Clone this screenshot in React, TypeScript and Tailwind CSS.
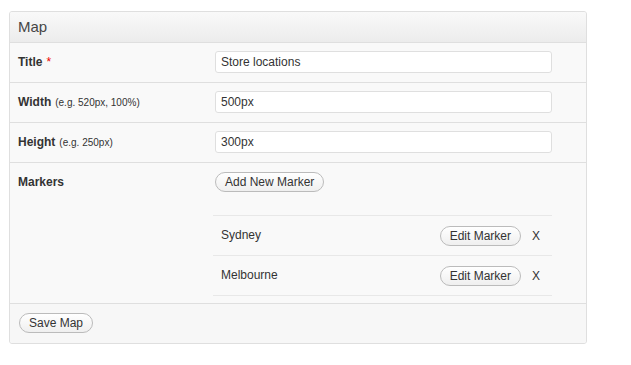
const font = { fontFamily: '"Liberation Sans", Arial, Helvetica, sans-serif' };

const Pill = ({ children }: { children: React.ReactNode }) => (
  <button className="block h-5 rounded-full border border-[#bbbbbb] bg-gradient-to-b from-white to-[#efefef] px-[9px] text-[12px] leading-[18px] text-[#333]">
    {children}
  </button>
);

const Field = ({ label, hint, required, value }: { label: string; hint?: string; required?: boolean; value: string }) => (
  <div className="flex h-10 items-start border-t border-[#dfdfdf] pt-2">
    <div className="flex h-[22px] w-[205px] items-center pl-2 text-[12px] text-[#333]">
      <span className="font-bold">{label}</span>
      {required && <span className="ml-1 text-[#e00]">*</span>}
      {hint && <span className="ml-1 text-[10px]">{hint}</span>}
    </div>
    <input
      className="h-[22px] w-[337px] rounded-[3px] border border-[#dfdfdf] bg-white px-[5px] text-[12px] text-[#333] outline-none"
      defaultValue={value}
    />
  </div>
);

const markers = ["Sydney", "Melbourne"];

export default function App() {
  return (
    <div className="min-h-screen bg-white pl-[9px] pt-[11px]" style={font}>
      <div className="w-[578px] overflow-hidden rounded-[3px] border border-[#dfdfdf] bg-[#f9f9f9]">
        <div className="h-[30px] bg-gradient-to-b from-[#f9f9f9] to-[#ececec] pl-2 text-[15px] leading-[30px] text-[#464646]">
          Map
        </div>
        <Field label="Title" required value="Store locations" />
        <Field label="Width" hint="(e.g. 520px, 100%)" value="500px" />
        <Field label="Height" hint="(e.g. 250px)" value="300px" />
        <div className="flex h-[141px] items-start border-t border-[#dfdfdf] pt-[9px]">
          <div className="flex h-5 w-[205px] items-center pl-2 text-[12px] font-bold text-[#333]">Markers</div>
          <div>
            <Pill>Add New Marker</Pill>
            <div className="-ml-[2px] mt-[23px] w-[339px] border-b border-[#e8e8e8]">
              {markers.map((m) => (
                <div key={m} className="flex h-10 items-center border-t border-[#e8e8e8] pl-2 pr-3 text-[12px] text-[#333]">
                  <span className="-mt-[2px] flex-1">{m}</span>
                  <Pill>Edit Marker</Pill>
                  <span className="ml-[11px]">X</span>
                </div>
              ))}
            </div>
          </div>
        </div>
        <div className="flex h-10 items-start border-t border-[#dfdfdf] bg-[#f7f7f7] pl-[9px] pt-[9px]">
          <Pill>Save Map</Pill>
        </div>
      </div>
    </div>
  );
}
